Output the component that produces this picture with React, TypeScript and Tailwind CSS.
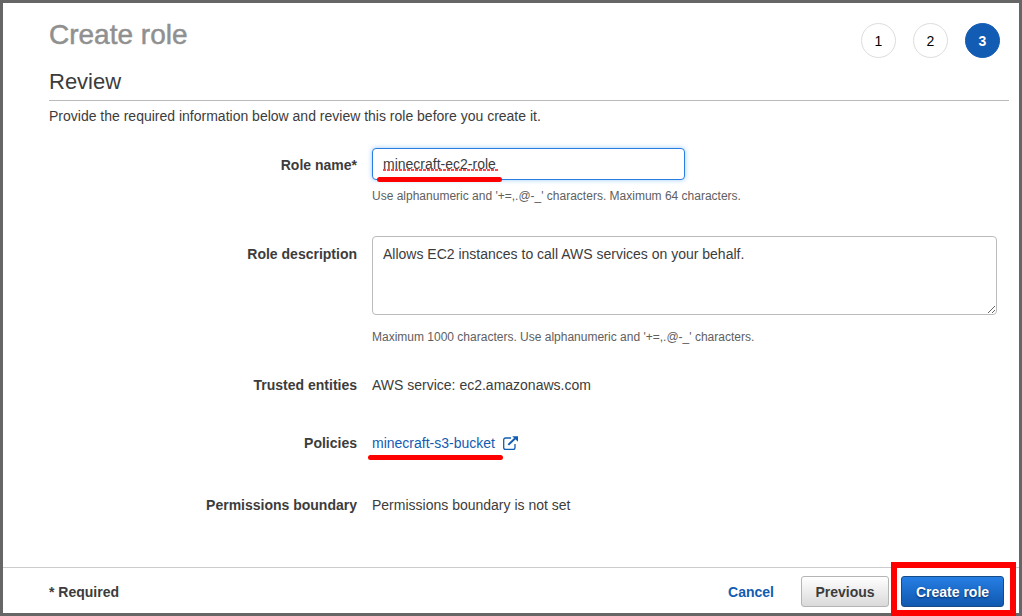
import type { ReactNode } from "react";

const steps = [1, 2, 3];
const currentStep = 3;

function Row({ label, htmlFor, className = "", labelClass = "", children }: {
  label: string;
  htmlFor?: string;
  className?: string;
  labelClass?: string;
  children: ReactNode;
}) {
  const labelStyle = `text-right font-bold ${labelClass}`;
  return (
    <div className={`grid grid-cols-[minmax(120px,308px)_minmax(0,1fr)] gap-x-[15px] ${className}`}>
      {htmlFor ? (
        <label htmlFor={htmlFor} className={labelStyle}>{label}</label>
      ) : (
        <div className={labelStyle}>{label}</div>
      )}
      <div>{children}</div>
    </div>
  );
}

function ExternalIcon() {
  return (
    <svg viewBox="0 0 15 14" className="h-3.5 w-[15px]" fill="none" aria-hidden="true">
      <path d="M8 2H2.6A1.9 1.9 0 0 0 .7 3.9v7.5a1.9 1.9 0 0 0 1.9 1.9h7.5a1.9 1.9 0 0 0 1.9-1.9V8" stroke="currentColor" strokeWidth="1.3" />
      <path d="M5.3 8.9 12 2.5" stroke="currentColor" strokeWidth="2" />
      <path d="M9.2.2H15v5.6z" fill="currentColor" />
    </svg>
  );
}

export default function App() {
  return (
    <div className="flex min-h-screen flex-col border-[3px] border-[#666] bg-white font-['Liberation_Sans',Arial,sans-serif] text-sm leading-5 text-[#3c3c3c]">
      <main className="flex-1 pr-2.5 pb-12 pl-[46px]">
        <header className="flex items-start justify-between pt-3.5 pr-[9px]">
          <h1 className="text-[28px] leading-9 text-[#909090] [-webkit-text-stroke:0.5px_#909090]">Create role</h1>
          <ol className="flex gap-[17px] pt-1.5 text-black">
            {steps.map((n) => (
              <li
                key={n}
                aria-current={n === currentStep ? "step" : undefined}
                className={`flex size-[35px] items-center justify-center rounded-full border ${
                  n === currentStep ? "border-[#125cb3] bg-[#125cb3] font-bold text-white" : "border-[#ddd]"
                }`}
              >
                {n}
              </li>
            ))}
          </ol>
        </header>
        <h2 className="mt-2.5 border-b border-[#bbb] pb-1 text-[22px] leading-7">Review</h2>
        <p className="mt-[5px]">Provide the required information below and review this role before you create it.</p>

        <form id="role-form" onSubmit={(e) => e.preventDefault()}>
          <Row label="Role name*" htmlFor="role-name" className="mt-[22px]" labelClass="pt-[7px]">
            <div className="relative max-w-[313px]">
              <input
                id="role-name"
                type="text"
                defaultValue="minecraft-ec2-role"
                spellCheck={false}
                className="block h-8 w-full rounded border border-[#2a7de1] bg-white px-2.5 shadow-[0_0_5px_#9ccbfa] outline-none"
              />
              <span className="pointer-events-none absolute top-[21px] left-[11px] h-0.5 w-[115px] bg-[repeating-linear-gradient(90deg,#ff4d4d_0_3px,transparent_3px_4px)]" />
              <span className="pointer-events-none absolute top-[29px] left-[5px] h-[5px] w-[125px] rounded-full bg-[#fe0000]" />
            </div>
            <p className="mt-2 text-xs leading-4 text-[#606060]">
              Use alphanumeric and '+=,.@-_' characters. Maximum 64 characters.
            </p>
          </Row>

          <Row label="Role description" htmlFor="role-description" className="mt-8" labelClass="pt-2">
            <textarea
              id="role-description"
              defaultValue="Allows EC2 instances to call AWS services on your behalf."
              className="block h-[79px] w-full max-w-[625px] resize rounded border border-[#bbb] px-2.5 py-[7px] outline-none"
            />
            <p className="mt-3.5 text-xs leading-4 text-[#606060]">
              Maximum 1000 characters. Use alphanumeric and '+=,.@-_' characters.
            </p>
          </Row>

          <Row label="Trusted entities" className="mt-[30px]">AWS service: ec2.amazonaws.com</Row>

          <Row label="Policies" className="mt-[38px]">
            <a href="#policy" className="relative inline-flex items-center gap-2 text-[#125cb3]">
              minecraft-s3-bucket
              <ExternalIcon />
              <span className="pointer-events-none absolute top-[22px] -left-1 h-[5px] w-[135px] rounded-full bg-[#fe0000]" />
            </a>
          </Row>

          <Row label="Permissions boundary" className="mt-[42px]">Permissions boundary is not set</Row>
        </form>
      </main>

      <footer className="flex items-center justify-between border-t border-[#ccc] pt-2 pr-[15px] pb-1.5 pl-[46px] font-bold">
        <span>* Required</span>
        <div className="flex items-center">
          <button type="button" className="mr-[27px] font-bold text-[#125cb3]">Cancel</button>
          <button
            type="button"
            className="mr-3 h-[31px] w-[88px] rounded-[3px] border border-[#b5b5b5] bg-linear-to-b from-white to-[#dadada] font-bold"
          >
            Previous
          </button>
          <div className="relative">
            <button
              type="submit"
              form="role-form"
              className="block h-[31px] w-[103px] rounded-[3px] border border-[#164b8a] bg-linear-to-b from-[#267ee4] to-[#1059b0] font-bold text-white [text-shadow:0_1px_2px_#002b60]"
            >
              Create role
            </button>
            <span className="pointer-events-none absolute -top-3.5 -right-3 -bottom-[9px] -left-2.5 border-6 border-[#fe0000]" />
          </div>
        </div>
      </footer>
    </div>
  );
}
